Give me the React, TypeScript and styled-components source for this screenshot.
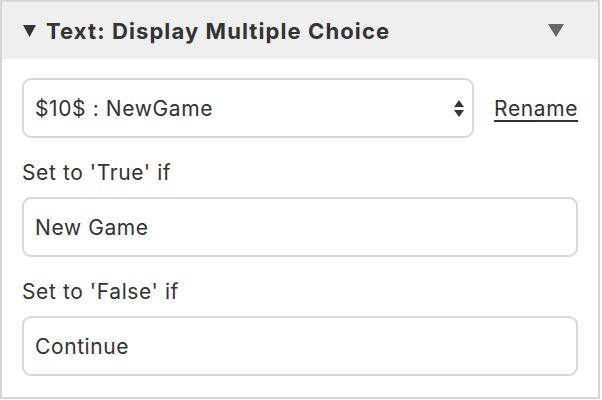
import styled, { createGlobalStyle } from "styled-components";

const GlobalStyle = createGlobalStyle`
  body {
    margin: 0;
    background: #ffffff;
    font-family: Inter, "Liberation Sans", sans-serif;
    color: #333333;
  }
`;

const Panel = styled.section`
  box-sizing: border-box;
  width: 600px;
  height: 399px;
  border: 2px solid #d5d5d5;
  background: #ffffff;
`;

const Header = styled.header`
  display: flex;
  align-items: center;
  height: 57px;
  padding: 0 34px 0 21px;
  background: #efefef;
  font-size: 22px;
  font-weight: 700;
  letter-spacing: 1.1px;
  color: #333333;
`;

const Title = styled.div`
  flex: 1;
  display: flex;
  align-items: center;
  gap: 10px;
`;

const Body = styled.div`
  display: flex;
  flex-direction: column;
  padding: 19px 20px 0 20px;
`;

const SelectRow = styled.div`
  display: flex;
  align-items: center;
  gap: 20px;
`;

const Field = styled.div<{ $grow?: boolean }>`
  box-sizing: border-box;
  display: flex;
  align-items: center;
  height: 60px;
  padding: 0 8px 0 11px;
  border: 2px solid #d8d8d8;
  border-radius: 9px;
  font-size: 21px;
  letter-spacing: 0.6px;
  color: #333333;
  ${({ $grow }) => ($grow ? "flex: 1;" : "")}
`;

const FieldText = styled.span`
  flex: 1;
`;

const RenameLink = styled.a`
  font-size: 21px;
  letter-spacing: 0.6px;
  color: #333333;
  text-decoration: underline;
  text-decoration-thickness: 2px;
  text-underline-offset: 4px;
  cursor: pointer;
`;

const Label = styled.div`
  font-size: 21px;
  letter-spacing: 0.6px;
  color: #333333;
  margin: 22px 0 12px;
`;

const Triangle = ({ color, w, h }: { color: string; w: number; h: number }) => (
  <svg width={w} height={h} viewBox="0 0 14 12" preserveAspectRatio="none">
    <path d="M0 0 H14 L7 12 Z" fill={color} />
  </svg>
);

const UpDown = () => (
  <svg width="10" height="17" viewBox="0 0 10 17">
    <path d="M5 0 L10 7 H0 Z" fill="#333" />
    <path d="M0 10 H10 L5 17 Z" fill="#333" />
  </svg>
);

export default function App() {
  return (
    <>
      <GlobalStyle />
      <Panel>
        <Header>
          <Title>
            <Triangle color="#333333" w={13} h={12} />
            Text: Display Multiple Choice
          </Title>
          <Triangle color="#666666" w={16} h={13} />
        </Header>
        <Body>
          <SelectRow>
            <Field $grow>
              <FieldText>$10$ : NewGame</FieldText>
              <UpDown />
            </Field>
            <RenameLink>Rename</RenameLink>
          </SelectRow>
          <Label>Set to 'True' if</Label>
          <Field>New Game</Field>
          <Label>Set to 'False' if</Label>
          <Field>Continue</Field>
        </Body>
      </Panel>
    </>
  );
}
